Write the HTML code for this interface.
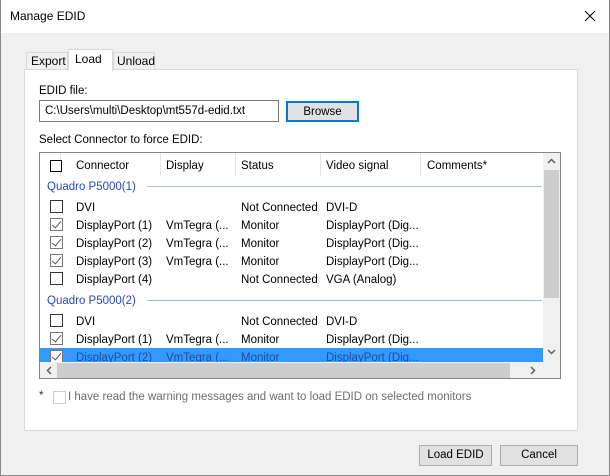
<!DOCTYPE html><html><head><style>
*{margin:0;padding:0;box-sizing:border-box}
body{width:610px;height:476px;overflow:hidden;font-family:"Liberation Sans",sans-serif;font-size:11.5px;color:#000;background:#f0f0f0;position:relative}
.a{position:absolute;white-space:nowrap}
.cb{position:absolute;width:13px;height:13px;border:1px solid #333;background:#fff}
.ck{border-color:#777}
.ck:after{content:"";position:absolute;left:3px;top:0px;width:4px;height:8px;border:solid #555;border-width:0 1.3px 1.3px 0;transform:rotate(40deg)}
.t{position:absolute;line-height:18px;white-space:nowrap;margin-top:1px}
.g{color:#2647c4}
.hl{position:absolute;height:1px;background:#a8bde6}
.hd{position:absolute;top:0;width:1px;height:23px;background:#e5e5e5}
.btn{position:absolute;border:1px solid #adadad;background:#e1e1e1;text-align:center;line-height:19px}
</style></head><body>
<div class="a" style="left:0;top:0;width:610px;height:33px;background:#fff"></div>
<div class="a" style="left:10px;top:9px;font-size:12px">Manage EDID</div>
<svg class="a" style="left:584px;top:10px" width="12" height="12"><path d="M1 1L11 11M11 1L1 11" stroke="#000" stroke-width="1"/></svg>
<div class="a" style="left:0;top:0;width:610px;height:476px;border:1px solid #888;border-top:none"></div>
<div class="a" style="left:26px;top:52px;width:42px;height:18px;border:1px solid #d9d9d9;border-bottom:none;background:#f0f0f0"></div>
<div class="a" style="left:31px;top:54px;font-size:12px">Export</div>
<div class="a" style="left:113px;top:52px;width:42px;height:18px;border:1px solid #d9d9d9;border-bottom:none;background:#f0f0f0"></div>
<div class="a" style="left:117px;top:54px;font-size:12px">Unload</div>
<div class="a" style="left:24px;top:69px;width:554px;height:362px;border:1px solid #d9d9d9;background:#fff"></div>
<div class="a" style="left:68px;top:49px;width:45px;height:22px;border:1px solid #d9d9d9;border-bottom:none;background:#fff"></div>
<div class="a" style="left:75px;top:52px;font-size:12px">Load</div>
<div class="a" style="left:39px;top:85px">EDID file:</div>
<div class="a" style="left:39px;top:100px;width:240px;height:22px;border:1px solid #7a7a7a;background:#fff;padding:4px 5px">C:\Users\multi\Desktop\mt557d-edid.txt</div>
<div class="btn" style="left:286px;top:101px;width:73px;height:21px;border:2px solid #0078d7;line-height:18px">Browse</div>
<div class="a" style="left:39px;top:134px">Select Connector to force EDID:</div>
<div class="a" style="left:39px;top:152px;width:522px;height:227px;border:1px solid #828790;background:#fff;overflow:hidden">
 <div class="hd" style="left:20px"></div><div class="hd" style="left:120px"></div><div class="hd" style="left:195px"></div><div class="hd" style="left:280px"></div><div class="hd" style="left:380px"></div>
 <div class="cb" style="left:10px;top:7px;width:12px;height:12px;border-color:#000"></div>
 <div class="t" style="left:36px;top:3px">Connector</div><div class="t" style="left:126px;top:3px">Display</div><div class="t" style="left:201px;top:3px">Status</div><div class="t" style="left:286px;top:3px">Video signal</div><div class="t" style="left:387px;top:3px">Comments*</div>
 <div class="t g" style="left:7px;top:24px">Quadro P5000(1)</div><div class="hl" style="left:107px;top:33px;width:395px"></div>
 <div class="cb" style="left:10px;top:47px"></div><div class="t" style="left:36px;top:45px">DVI</div><div class="t" style="left:201px;top:45px">Not Connected</div><div class="t" style="left:286px;top:45px">DVI-D</div>
 <div class="cb ck" style="left:10px;top:65px"></div><div class="t" style="left:36px;top:63px">DisplayPort (1)</div><div class="t" style="left:126px;top:63px">VmTegra (...</div><div class="t" style="left:201px;top:63px">Monitor</div><div class="t" style="left:286px;top:63px">DisplayPort (Dig...</div>
 <div class="cb ck" style="left:10px;top:83px"></div><div class="t" style="left:36px;top:81px">DisplayPort (2)</div><div class="t" style="left:126px;top:81px">VmTegra (...</div><div class="t" style="left:201px;top:81px">Monitor</div><div class="t" style="left:286px;top:81px">DisplayPort (Dig...</div>
 <div class="cb ck" style="left:10px;top:101px"></div><div class="t" style="left:36px;top:99px">DisplayPort (3)</div><div class="t" style="left:126px;top:99px">VmTegra (...</div><div class="t" style="left:201px;top:99px">Monitor</div><div class="t" style="left:286px;top:99px">DisplayPort (Dig...</div>
 <div class="cb" style="left:10px;top:119px"></div><div class="t" style="left:36px;top:117px">DisplayPort (4)</div><div class="t" style="left:201px;top:117px">Not Connected</div><div class="t" style="left:286px;top:117px">VGA (Analog)</div>
 <div class="t g" style="left:7px;top:138px">Quadro P5000(2)</div><div class="hl" style="left:107px;top:147px;width:395px"></div>
 <div class="cb" style="left:10px;top:161px"></div><div class="t" style="left:36px;top:159px">DVI</div><div class="t" style="left:201px;top:159px">Not Connected</div><div class="t" style="left:286px;top:159px">DVI-D</div>
 <div class="cb ck" style="left:10px;top:179px"></div><div class="t" style="left:36px;top:177px">DisplayPort (1)</div><div class="t" style="left:126px;top:177px">VmTegra (...</div><div class="t" style="left:201px;top:177px">Monitor</div><div class="t" style="left:286px;top:177px">DisplayPort (Dig...</div>
 <div class="a" style="left:0;top:195px;width:503px;height:14px;background:#3399ff"></div>
 <div class="cb ck" style="left:10px;top:197px"></div>
 <div class="t" style="left:36px;top:195px;color:#1b4fa0">DisplayPort (2)</div><div class="t" style="left:126px;top:195px;color:#1b4fa0">VmTegra (...</div><div class="t" style="left:201px;top:195px;color:#1b4fa0">Monitor</div><div class="t" style="left:286px;top:195px;color:#1b4fa0">DisplayPort (Dig...</div>
 <div class="a" style="left:503px;top:0;width:17px;height:209px;background:#f0f0f0"></div>
 <div class="a" style="left:504px;top:17px;width:15px;height:128px;background:#cdcdcd"></div>
 <svg class="a" style="left:507px;top:5px" width="9" height="6"><path d="M1 5L4.5 1.5L8 5" stroke="#606060" stroke-width="1.5" fill="none"/></svg>
 <svg class="a" style="left:507px;top:196px" width="9" height="6"><path d="M1 1L4.5 4.5L8 1" stroke="#606060" stroke-width="1.5" fill="none"/></svg>
 <div class="a" style="left:0;top:209px;width:520px;height:17px;background:#f0f0f0"></div>
 <div class="a" style="left:17px;top:210px;width:453px;height:15px;background:#cdcdcd"></div>
 <svg class="a" style="left:6px;top:213px" width="6" height="9"><path d="M5 1L1.5 4.5L5 8" stroke="#606060" stroke-width="1.5" fill="none"/></svg>
 <svg class="a" style="left:490px;top:213px" width="6" height="9"><path d="M1 1L4.5 4.5L1 8" stroke="#606060" stroke-width="1.5" fill="none"/></svg>
</div>
<div class="a" style="left:39px;top:390px;color:#333">*</div>
<div class="cb" style="left:53px;top:391px;border-color:#ccc"></div>
<div class="a" style="left:68px;top:391px;color:#6d6d6d">I have read the warning messages and want to load EDID on selected monitors</div>
<div class="btn" style="left:419px;top:445px;width:73px;height:21px">Load EDID</div>
<div class="btn" style="left:500px;top:445px;width:78px;height:21px">Cancel</div>
</body></html>
